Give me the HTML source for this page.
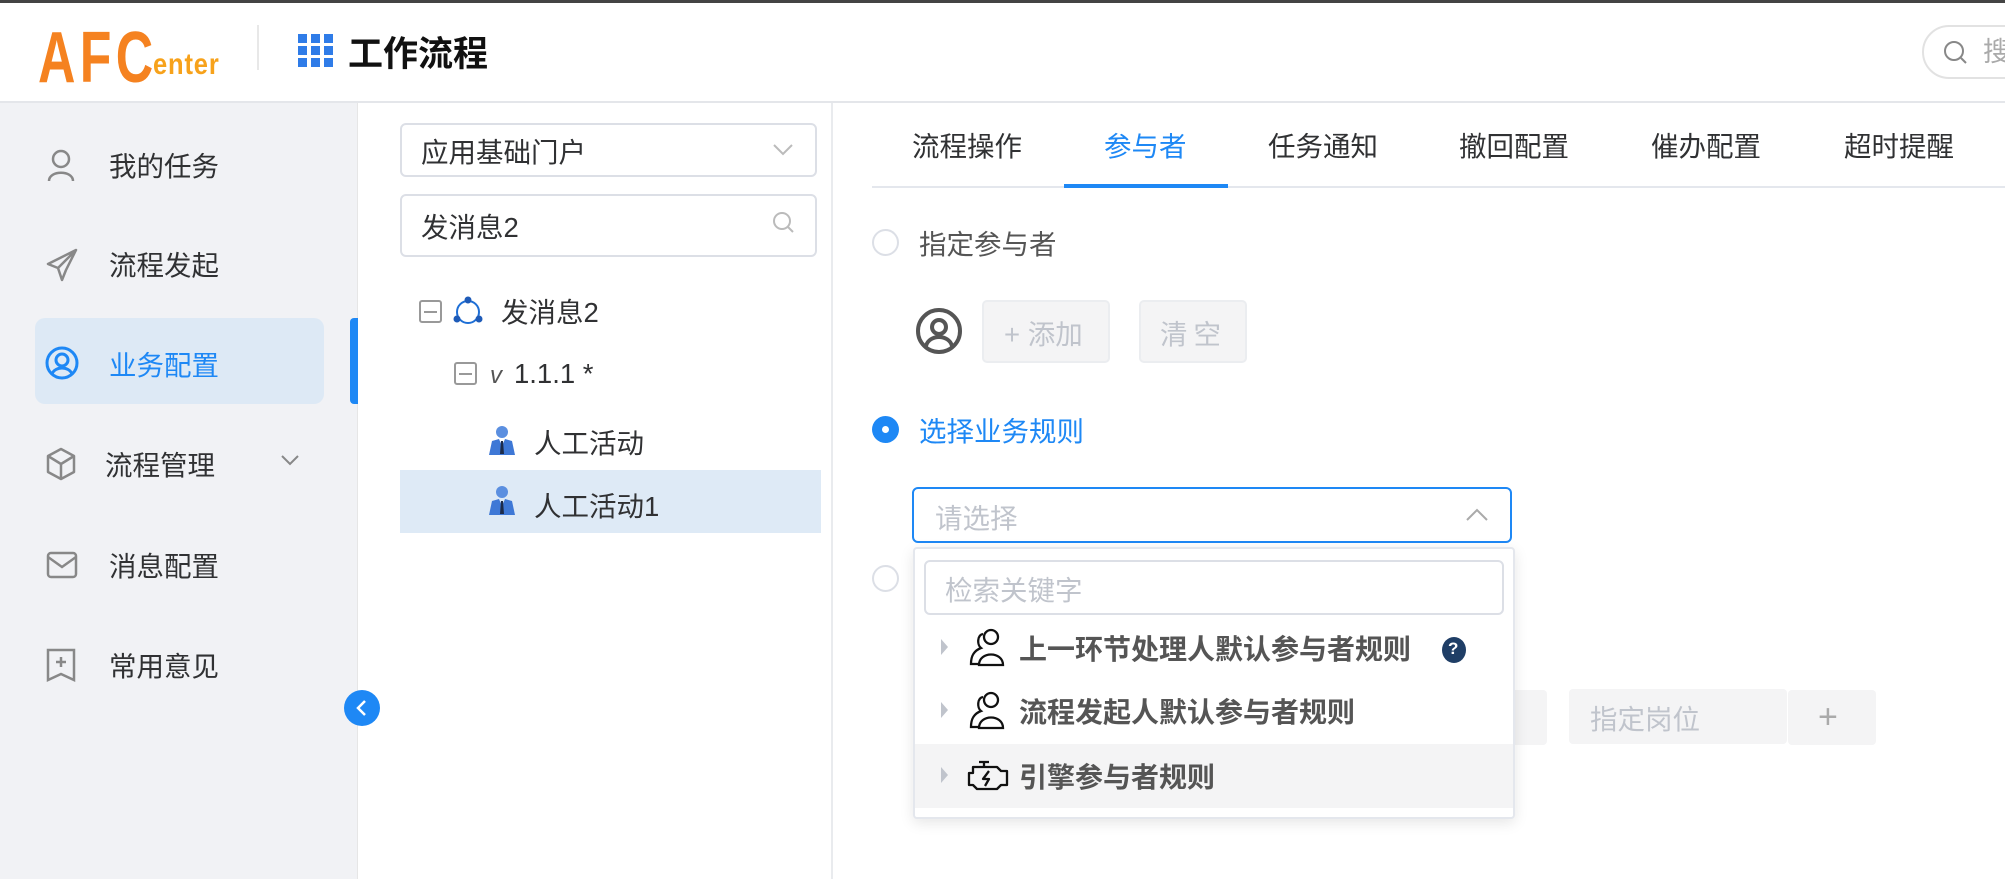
<!DOCTYPE html>
<html><head><meta charset="utf-8"><style>
*{box-sizing:border-box;margin:0;padding:0}
body{width:2005px;height:879px;overflow:hidden;background:#fff;font-family:"Liberation Sans","Noto Sans CJK SC",sans-serif;color:#303133;position:relative}
.a{position:absolute}
.t{position:absolute;white-space:nowrap;line-height:1}
</style></head><body>
<div class="a" style="left:0;top:0;width:2005px;height:3px;background:#444"></div>
<div class="a" style="left:0;top:101px;width:2005px;height:2px;background:#e4e6ea"></div>
<!-- logo -->
<div class="t" style="left:38px;top:22px;font-size:72px;font-weight:bold;color:#f58220;letter-spacing:6px;transform:scale(0.72,1);transform-origin:left top">AFC</div>
<div class="t" style="left:153px;top:50px;font-size:30px;font-weight:bold;color:#f7a21b;letter-spacing:1px;transform:scaleX(0.85);transform-origin:left">enter</div>
<div class="a" style="left:257px;top:25px;width:2px;height:45px;background:#e8e8e8"></div>
<svg class="a" style="left:298px;top:34px" width="36" height="34"><g fill="#2f7ce8">
<rect x="0" y="0" width="9" height="9"/><rect x="13" y="0" width="9" height="9"/><rect x="26" y="0" width="9" height="9"/>
<rect x="0" y="12" width="9" height="9"/><rect x="13" y="12" width="9" height="9"/><rect x="26" y="12" width="9" height="9"/>
<rect x="0" y="24" width="9" height="9"/><rect x="13" y="24" width="9" height="9"/><rect x="26" y="24" width="9" height="9"/></g></svg>
<div class="t" style="left:348px;top:37px;font-size:35px;font-weight:bold;color:#111">工作流程</div>
<div class="a" style="left:1922px;top:25px;width:120px;height:54px;border:2px solid #e2e2e2;border-radius:27px"></div>
<svg class="a" style="left:1943px;top:40px" width="26" height="26"><circle cx="11" cy="11" r="9" fill="none" stroke="#888" stroke-width="2"/><line x1="18" y1="18" x2="23" y2="23" stroke="#888" stroke-width="2"/></svg>
<div class="t" style="left:1983px;top:39px;font-size:27px;color:#aaa">搜</div>

<!-- sidebar -->
<div class="a" style="left:0;top:103px;width:358px;height:776px;background:#f1f2f5;border-right:1px solid #e6e6e6"></div>
<div class="a" style="left:35px;top:318px;width:289px;height:86px;background:#dde9f5;border-radius:10px"></div>
<div class="a" style="left:350px;top:318px;width:8px;height:86px;background:#1e88f5;border-radius:4px 0 0 4px"></div>
<svg class="a" style="left:46px;top:148px" width="30" height="34" fill="none" stroke="#888" stroke-width="2.5"><circle cx="15" cy="11" r="8"/><path d="M3 33 C3 22 27 22 27 33"/></svg>
<div class="t" style="left:109px;top:153px;font-size:27.5px">我的任务</div>
<svg class="a" style="left:46px;top:248px" width="32" height="34" fill="none" stroke="#888" stroke-width="2.5" stroke-linejoin="round"><path d="M30 2 L2 16 L12 20 L16 32 L20 22 Z M12 20 L30 2"/></svg>
<div class="t" style="left:109px;top:252px;font-size:27.5px">流程发起</div>
<svg class="a" style="left:45px;top:346px" width="34" height="34" fill="none" stroke="#1e88f5" stroke-width="3"><circle cx="17" cy="17" r="15"/><circle cx="17" cy="14" r="6"/><path d="M7 28 C10 20 24 20 27 28"/></svg>
<div class="t" style="left:109px;top:352px;font-size:27.5px;color:#1e88f5">业务配置</div>
<svg class="a" style="left:46px;top:447px" width="30" height="34" fill="none" stroke="#888" stroke-width="2.5" stroke-linejoin="round"><path d="M15 2 L28 9 L28 25 L15 32 L2 25 L2 9 Z M2 9 L15 17 L28 9 M15 17 L15 32"/></svg>
<div class="t" style="left:105px;top:452px;font-size:27.5px">流程管理</div>
<svg class="a" style="left:280px;top:454px" width="20" height="14" fill="none" stroke="#888" stroke-width="2"><path d="M2 2 L10 10 L18 2"/></svg>
<svg class="a" style="left:46px;top:551px" width="32" height="28" fill="none" stroke="#888" stroke-width="2.5"><rect x="2" y="2" width="28" height="24" rx="3"/><path d="M2 6 L16 16 L30 6"/></svg>
<div class="t" style="left:109px;top:553px;font-size:27.5px">消息配置</div>
<svg class="a" style="left:46px;top:648px" width="30" height="34" fill="none" stroke="#888" stroke-width="2.5"><path d="M2 2 H28 V32 L15 26 L2 32 Z M15 9 V19 M10 14 H20"/></svg>
<div class="t" style="left:109px;top:653px;font-size:27.5px">常用意见</div>
<div class="a" style="left:344px;top:690px;width:36px;height:36px;border-radius:50%;background:#1e88f5"></div>
<svg class="a" style="left:355px;top:699px" width="14" height="18" fill="none" stroke="#fff" stroke-width="2.5"><path d="M10 2 L3 9 L10 16"/></svg>

<!-- tree panel -->
<div class="a" style="left:831px;top:103px;width:2px;height:776px;background:#e9ebee"></div>
<div class="a" style="left:400px;top:123px;width:417px;height:54px;border:2px solid #dcdfe6;border-radius:6px"></div>
<div class="t" style="left:421px;top:139px;font-size:27.5px">应用基础门户</div>
<svg class="a" style="left:772px;top:143px" width="22" height="14" fill="none" stroke="#bbb" stroke-width="2"><path d="M2 2 L11 11 L20 2"/></svg>
<div class="a" style="left:400px;top:194px;width:417px;height:63px;border:2px solid #dcdfe6;border-radius:6px"></div>
<div class="t" style="left:421px;top:214px;font-size:27.5px">发消息2</div>
<svg class="a" style="left:771px;top:210px" width="24" height="26" fill="none" stroke="#bbb" stroke-width="2"><circle cx="11" cy="11" r="8"/><line x1="17" y1="17" x2="22" y2="22"/></svg>
<div class="a" style="left:419px;top:300px;width:23px;height:23px;border:2px solid #999;border-radius:3px"></div>
<div class="a" style="left:424px;top:311px;width:13px;height:2px;background:#999"></div>
<svg class="a" style="left:453px;top:296px" width="30" height="30" fill="none"><circle cx="15" cy="16" r="11" stroke="#1e6fd6" stroke-width="2"/><circle cx="15" cy="4" r="3.5" fill="#1e5bb8"/><circle cx="4" cy="23" r="3.5" fill="#1e5bb8"/><circle cx="26" cy="23" r="3.5" fill="#1e5bb8"/></svg>
<div class="t" style="left:501px;top:299px;font-size:27.5px">发消息2</div>
<div class="a" style="left:454px;top:362px;width:23px;height:23px;border:2px solid #999;border-radius:3px"></div>
<div class="a" style="left:459px;top:373px;width:13px;height:2px;background:#999"></div>
<div class="t" style="left:490px;top:364px;font-size:24px;font-style:italic;color:#555">v</div>
<div class="t" style="left:514px;top:360px;font-size:27.5px">1.1.1 *</div>
<svg class="a" style="left:488px;top:426px" width="28" height="30"><circle cx="14" cy="6" r="6" fill="#5b8fe0"/><path d="M1 29 L4 15 L11 13 L14 20 L17 13 L24 15 L27 29 Z" fill="#3e78d6"/><path d="M13 15 L15 15 L16 28 L12 28 Z" fill="#1c2b4a"/></svg>
<div class="t" style="left:534px;top:430px;font-size:27.5px">人工活动</div>
<div class="a" style="left:400px;top:470px;width:421px;height:63px;background:#deeaf6"></div>
<svg class="a" style="left:488px;top:486px" width="28" height="30"><circle cx="14" cy="6" r="6" fill="#5b8fe0"/><path d="M1 29 L4 15 L11 13 L14 20 L17 13 L24 15 L27 29 Z" fill="#3e78d6"/><path d="M13 15 L15 15 L16 28 L12 28 Z" fill="#1c2b4a"/></svg>
<div class="t" style="left:534px;top:493px;font-size:27.5px">人工活动1</div>

<!-- tabs -->
<div class="a" style="left:872px;top:186px;width:1133px;height:2px;background:#e4e7ed"></div>
<div class="a" style="left:1064px;top:184px;width:164px;height:4px;background:#1e88f5"></div>
<div class="t" style="left:912px;top:133px;font-size:27.5px">流程操作</div>
<div class="t" style="left:1104px;top:133px;font-size:27.5px;color:#1e88f5">参与者</div>
<div class="t" style="left:1268px;top:133px;font-size:27.5px">任务通知</div>
<div class="t" style="left:1459px;top:133px;font-size:27.5px">撤回配置</div>
<div class="t" style="left:1651px;top:133px;font-size:27.5px">催办配置</div>
<div class="t" style="left:1844px;top:133px;font-size:27.5px">超时提醒</div>

<div class="a" style="left:872px;top:229px;width:27px;height:27px;border:2px solid #dcdfe6;border-radius:50%"></div>
<div class="t" style="left:919px;top:231px;font-size:27.5px;color:#555">指定参与者</div>
<svg class="a" style="left:915px;top:306px" width="48" height="50" fill="none" stroke="#555" stroke-width="4"><circle cx="24" cy="25" r="21"/><circle cx="24" cy="21" r="7"/><path d="M11 40 C14 28 34 28 37 40"/></svg>
<div class="a" style="left:982px;top:300px;width:128px;height:63px;background:#f4f4f5;border:2px solid #ebedf0;border-radius:5px"></div>
<div class="t" style="left:1004px;top:321px;font-size:27.5px;color:#c0c4cc">+ 添加</div>
<div class="a" style="left:1139px;top:300px;width:108px;height:63px;background:#f4f4f5;border:2px solid #ebedf0;border-radius:5px"></div>
<div class="t" style="left:1160px;top:321px;font-size:27.5px;color:#c0c4cc;letter-spacing:6px">清空</div>

<div class="a" style="left:872px;top:416px;width:27px;height:27px;border-radius:50%;background:#1e88f5"></div>
<div class="a" style="left:882px;top:426px;width:7px;height:7px;border-radius:50%;background:#fff"></div>
<div class="t" style="left:919px;top:418px;font-size:27.5px;color:#1e88f5">选择业务规则</div>

<div class="a" style="left:912px;top:487px;width:600px;height:56px;border:2px solid #1e88f5;border-radius:6px"></div>
<div class="t" style="left:935px;top:505px;font-size:27.5px;color:#c0c4cc">请选择</div>
<svg class="a" style="left:1465px;top:508px" width="24" height="14" fill="none" stroke="#aaa" stroke-width="2"><path d="M2 12 L12 2 L22 12"/></svg>

<div class="a" style="left:872px;top:565px;width:27px;height:27px;border:2px solid #dcdfe6;border-radius:50%"></div>

<!-- behind dropdown -->
<div class="a" style="left:1500px;top:690px;width:47px;height:55px;background:#f4f4f5;border-radius:4px"></div>
<div class="a" style="left:1569px;top:689px;width:218px;height:55px;background:#f4f4f5;border-radius:4px"></div>
<div class="t" style="left:1590px;top:706px;font-size:27.5px;color:#c0c4cc">指定岗位</div>
<div class="a" style="left:1788px;top:690px;width:88px;height:55px;background:#f4f4f5;border-radius:4px"></div>
<div class="t" style="left:1818px;top:700px;font-size:34px;color:#aaa">+</div>

<!-- dropdown -->
<div class="a" style="left:913px;top:547px;width:602px;height:272px;background:#fff;border:2px solid #e4e7ed;border-radius:4px;box-shadow:0 4px 14px rgba(0,0,0,0.1)"></div>
<div class="a" style="left:924px;top:560px;width:580px;height:55px;border:2px solid #dcdfe6;border-radius:6px"></div>
<div class="t" style="left:945px;top:577px;font-size:27.5px;color:#c0c4cc">检索关键字</div>
<div class="a" style="left:915px;top:744px;width:598px;height:64px;background:#f4f4f5"></div>
<svg class="a" style="left:940px;top:637px" width="10" height="20"><path d="M1 2 L8 10 L1 18 Z" fill="#c0c4cc"/></svg>
<svg class="a" style="left:940px;top:700px" width="10" height="20"><path d="M1 2 L8 10 L1 18 Z" fill="#c0c4cc"/></svg>
<svg class="a" style="left:940px;top:765px" width="10" height="20"><path d="M1 2 L8 10 L1 18 Z" fill="#c0c4cc"/></svg>
<svg class="a" style="left:967px;top:627px" width="44" height="40" fill="none" stroke="#111" stroke-width="2.3"><circle cx="24" cy="10" r="7"/><path d="M12 38 C12 24 36 24 36 38 Z"/><path d="M16 7 C10 8 10 18 14 21 C6 24 4 30 4 37 L11 37"/></svg>
<div class="t" style="left:1019px;top:636px;font-size:28px;font-weight:bold;color:#555">上一环节处理人默认参与者规则</div>
<div class="a" style="left:1442px;top:637px;width:24px;height:26px;border-radius:50%;background:#1f3e66"></div>
<div class="t" style="left:1448px;top:640px;font-size:17px;font-weight:bold;color:#fff">?</div>
<svg class="a" style="left:967px;top:690px" width="44" height="40" fill="none" stroke="#111" stroke-width="2.3"><circle cx="24" cy="10" r="7"/><path d="M12 38 C12 24 36 24 36 38 Z"/><path d="M16 7 C10 8 10 18 14 21 C6 24 4 30 4 37 L11 37"/></svg>
<div class="t" style="left:1019px;top:699px;font-size:28px;font-weight:bold;color:#555">流程发起人默认参与者规则</div>
<svg class="a" style="left:967px;top:760px" width="44" height="32" fill="none" stroke="#111" stroke-width="2.3" stroke-linejoin="round"><path d="M12 2 H22 M17 2 V7 M6 7 H30 L34 11 H40 V25 H34 L30 29 H10 L6 25 H2 V13 H6 Z"/><path d="M22 11 L16 19 H22 L18 26"/></svg>
<div class="t" style="left:1019px;top:764px;font-size:28px;font-weight:bold;color:#555">引擎参与者规则</div>
</body></html>
